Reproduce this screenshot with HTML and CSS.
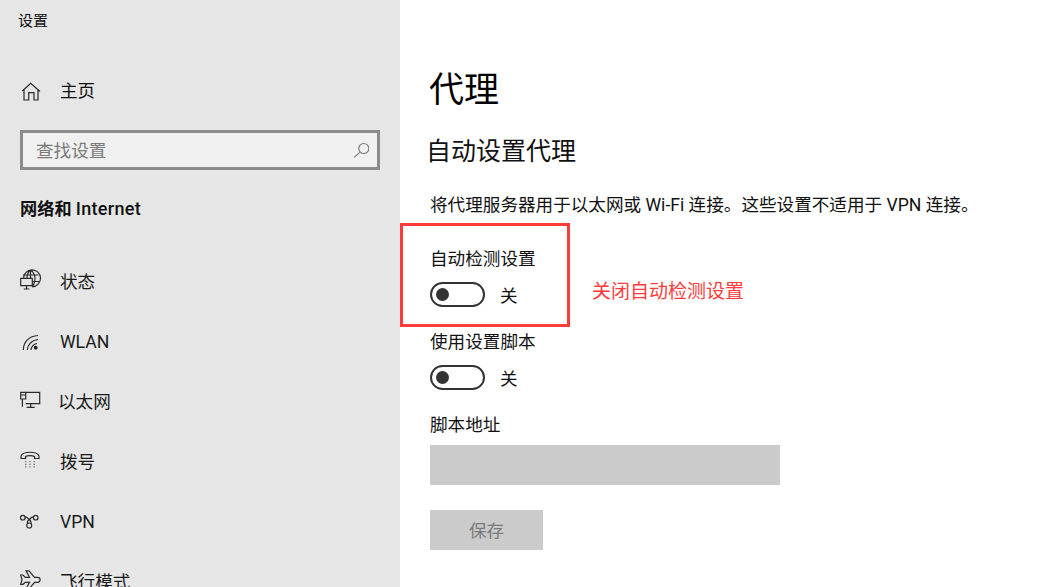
FILE: index.html
```html
<!DOCTYPE html>
<html lang="zh-CN">
<head>
<meta charset="utf-8">
<title>设置</title>
<link rel="stylesheet" href="styles.css">
</head>
<body>
<div class="app">
  <aside class="sidebar">
    <div class="title">设置</div>
    <div class="home">
      <svg class="icon" viewBox="0 0 20 20"><path d="M2.300 10 10.700 2.300 20 10.500M4 8.500V19H8.700V11.700H14V19H18V8.500"/></svg>
      <span>主页</span>
    </div>
    <div class="search">
      <span>查找设置</span>
      <svg class="search-icon" viewBox="0 0 16 16"><circle cx="10.800" cy="6.500" r="5"/><path d="M7.200 10.100 1 15.300"/></svg>
    </div>
    <div class="section">网络和 <span class="section-latin">Internet</span></div>
    <nav class="nav">
      <div class="item">
        <svg class="icon" viewBox="0 0 20 20"><path d="M3.500 8.300A8.500 8.500 0 1 1 12.300 16.800M3 5h15.500M12.300 11.500h6.700M10.500 0v8.300M10.500 0C8 2 7 5 6.800 8.300M10.500 0c3 2 4.500 5 4.500 8.500 0 3-1 6-3 8"/><path d="M.7 8.300h11.600v7.400H.7zM6.500 15.700V19M3.800 19h5.500"/></svg>
        <span>状态</span>
      </div>
      <div class="item">
        <svg class="icon" viewBox="0 0 20 20"><path d="M3.300 20C3.500 12 9 6 18 5.500M7.300 20C7.500 15 11.500 10 18 9.500M11 20C11 17 13.500 14 17 13.500"/><circle class="dot" cx="15.700" cy="17.700" r="1.900"/></svg>
        <span class="latin">WLAN</span>
      </div>
      <div class="item item-tight">
        <svg class="icon" viewBox="0 0 20 20"><path d="M5.700 2.300H19.700V13.700H5.700M10.700 13.700V17.300M6.700 17.300H14.700"/><path d="M.7 2.300h5v6.700h-5zM.7 5h5M2.400 9v7.700"/></svg>
        <span>以太网</span>
      </div>
      <div class="item">
        <svg class="icon" viewBox="0 0 20 20"><path d="M1 8.500V6C3 1 17 1 19 6v2.500h-4.500V6.500c-2-1.200-7-1.200-9 0v2z"/><path class="dots" d="M5.200 11.700h1.200M9.400 11.700h1.200M13.600 11.700h1.200M5.200 14.300h1.200M9.400 14.300h1.200M13.600 14.300h1.200M5.200 16.900h1.200M9.400 16.900h1.200M13.600 16.900h1.200"/></svg>
        <span>拨号</span>
      </div>
      <div class="item">
        <svg class="icon" viewBox="0 0 20 20"><circle cx="2.800" cy="7.700" r="2.300"/><circle cx="15.700" cy="7.700" r="2.300"/><circle cx="9.200" cy="15.500" r="2.500"/><path d="M5 6.800c2 0 3 1.500 4.200 2.700 1.200-1.200 2.300-2.700 4.300-2.700M9.200 9.500c-1.700 1-2 2.500-1.700 4.200M9.200 9.500c1.700 1 2 2.500 1.700 4.200"/></svg>
        <span class="latin">VPN</span>
      </div>
      <div class="item">
        <svg class="icon" viewBox="0 0 20 20"><path d="M.7 5H3l2.300 2.300h4.200L6 .8h3l5.500 6.500h3c3.500 0 3.500 5 0 5h-3L9 19H6l3.500-6.700H5.300L3 14.300H.7L2 9.700z"/></svg>
        <span>飞行模式</span>
      </div>
    </nav>
  </aside>
  <main class="main">
    <h1>代理</h1>
    <h2>自动设置代理</h2>
    <p class="desc">将代理服务器用于以太网或 Wi-Fi 连接。这些设置不适用于 VPN 连接。</p>
    <div class="field first">
      <div class="label">自动检测设置</div>
      <div class="toggle-row"><span class="toggle"><i></i></span><span>关</span></div>
    </div>
    <div class="field">
      <div class="label">使用设置脚本</div>
      <div class="toggle-row"><span class="toggle"><i></i></span><span>关</span></div>
    </div>
    <div class="label address">脚本地址</div>
    <div class="input"></div>
    <div class="save">保存</div>
    <div class="redbox"></div>
    <div class="note">关闭自动检测设置</div>
  </main>
</div>
</body>
</html>
```

FILE: styles.css
```css
html, body {
  margin: 0;
  padding: 0;
  height: 587px;
  overflow: hidden;
  background: #fff;
}
body {
  font-family: Roboto, "Noto Sans CJK SC", sans-serif;
  color: #111;
}
.app {
  display: flex;
  width: 1048px;
  height: 587px;
  overflow: hidden;
}
.sidebar {
  width: 400px;
  flex: none;
  background: #e6e6e6;
  box-sizing: border-box;
  padding-left: 20px;
}
.title {
  font-size: 15px;
  line-height: 20px;
  margin: 11px 0 0 -2px;
}
.home {
  display: flex;
  align-items: center;
  gap: 20px;
  height: 30px;
  margin-top: 45px;
  font-size: 17.6px;
  line-height: 30px;
}
.icon {
  width: 20px;
  height: 20px;
  flex: none;
  overflow: visible;
  fill: none;
  stroke: #2a2a2a;
  stroke-width: 1.2;
}
.icon .dot { fill: #222; stroke: none; }
.icon .dots { stroke: #666; stroke-width: 1.3; }
.search {
  display: flex;
  align-items: center;
  justify-content: space-between;
  box-sizing: border-box;
  width: 360px;
  height: 40px;
  margin-top: 24px;
  padding: 0 8px 2px 13px;
  background: #f0f0f0;
  border: 3px solid #8b8b8b;
  font-size: 17.6px;
  color: #7a7a7a;
}
.search-icon {
  width: 16px;
  height: 16px;
  margin-top: 2px;
  fill: none;
  stroke: #777;
  stroke-width: 1.1;
}
.section {
  font-size: 17.2px;
  font-weight: 700;
  line-height: 26px;
  margin-top: 26px;
}
.section-latin {
  font-size: 18px;
  font-weight: 500;
  letter-spacing: 0.3px;
}
.nav {
  display: flex;
  flex-direction: column;
  margin-top: 28px;
}
.item {
  display: flex;
  align-items: center;
  gap: 20px;
  height: 60px;
  font-size: 17.6px;
  color: #1a1a1a;
}
.item-tight { gap: 18px; }
.latin { padding-top: 3px; }
.main {
  position: relative;
  flex: 1;
  box-sizing: border-box;
  padding-left: 30px;
  font-size: 17.6px;
}
h1 {
  font-size: 35px;
  font-weight: 400;
  line-height: 50px;
  margin: 66px 0 0 -1px;
  color: #000;
}
h2 {
  font-size: 25px;
  font-weight: 400;
  line-height: 36px;
  margin: 18px 0 0 -4px;
  color: #111;
}
.desc {
  margin: 22px 0 0;
  line-height: 26px;
}
.field.first { margin-top: 28px; }
.field { margin-top: 20px; }
.label { line-height: 26px; }
.toggle-row {
  display: flex;
  align-items: center;
  gap: 15px;
  height: 30px;
  margin-top: 7px;
}
.toggle {
  display: flex;
  align-items: center;
  box-sizing: border-box;
  width: 55px;
  height: 25px;
  border: 2px solid #333;
  border-radius: 13px;
  padding-left: 4px;
}
.toggle i {
  display: block;
  width: 13px;
  height: 13px;
  border-radius: 50%;
  background: #333;
}
.address { margin-top: 20px; }
.input {
  width: 350px;
  height: 40px;
  margin-top: 7px;
  background: #cbcbcb;
}
.save {
  width: 113px;
  height: 40px;
  margin-top: 25px;
  background: #cbcbcb;
  color: #7a7a7a;
  text-align: center;
  line-height: 43px;
}
.redbox {
  position: absolute;
  left: 0;
  top: 223px;
  width: 164px;
  height: 98px;
  border: 3px solid #ff3b3b;
}
.note {
  position: absolute;
  left: 192px;
  top: 278px;
  font-size: 19px;
  line-height: 28px;
  color: #ff3b3b;
}
```
